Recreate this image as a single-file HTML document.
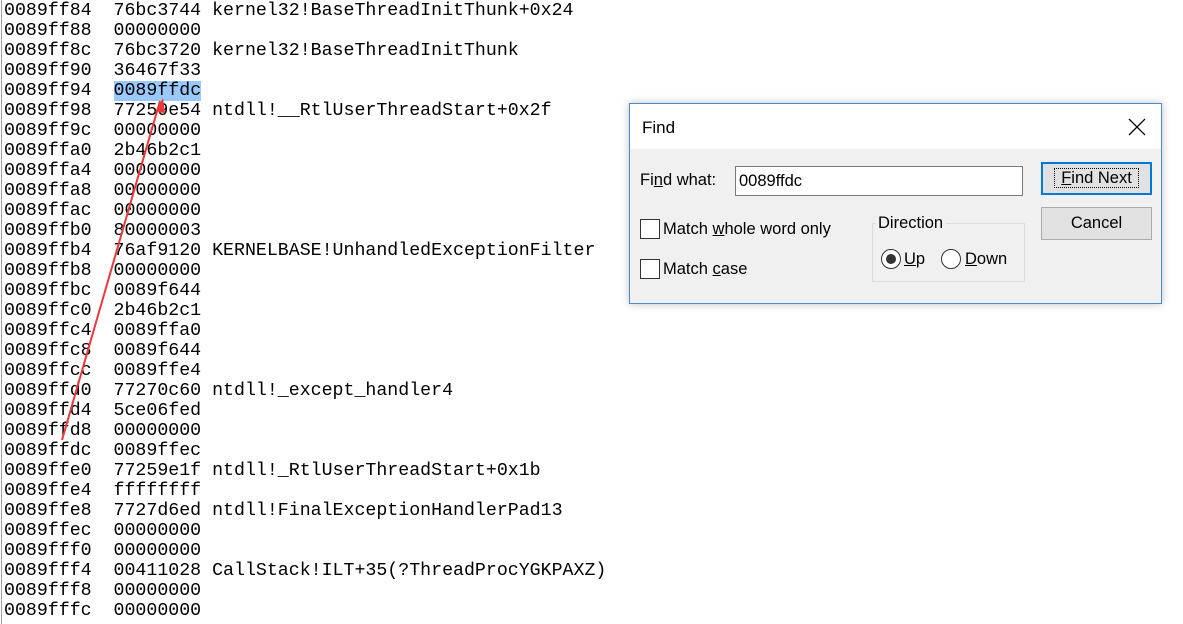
<!DOCTYPE html>
<html><head><style>
body{margin:0;width:1183px;height:624px;background:#fff;position:relative;overflow:hidden}
.lb{position:absolute;left:1px;top:0;width:1px;height:624px;background:#a0a0a0}
pre{position:absolute;left:4px;top:1px;margin:0;font-family:"Courier New","Liberation Mono",monospace;font-size:18.25px;line-height:20px;color:#000;letter-spacing:0}
.hl{background:#99c9ff}
.dlg{position:absolute;left:629px;top:103px;width:531px;height:199px;background:#f0f0f0;border:1px solid #4a8ad4;box-shadow:0 0 8px rgba(0,0,0,.25);font-family:"Liberation Sans",sans-serif;font-size:16.5px;color:#000}
.tb{position:absolute;left:0;top:0;width:531px;height:45px;background:#fff}
.a{position:absolute;white-space:nowrap}
u{text-decoration:underline}
.cb{position:absolute;width:18px;height:18px;border:1px solid #333;background:#fff}
.btn{position:absolute;width:109px;height:31px;background:#e1e1e1;border:1px solid #adadad;text-align:center;line-height:31px}
</style></head><body>
<div class="lb"></div>
<pre>0089ff84  76bc3744 kernel32!BaseThreadInitThunk+0x24
0089ff88  00000000
0089ff8c  76bc3720 kernel32!BaseThreadInitThunk
0089ff90  36467f33
0089ff94  <span class="hl">0089ffdc</span>
0089ff98  77259e54 ntdll!__RtlUserThreadStart+0x2f
0089ff9c  00000000
0089ffa0  2b46b2c1
0089ffa4  00000000
0089ffa8  00000000
0089ffac  00000000
0089ffb0  80000003
0089ffb4  76af9120 KERNELBASE!UnhandledExceptionFilter
0089ffb8  00000000
0089ffbc  0089f644
0089ffc0  2b46b2c1
0089ffc4  0089ffa0
0089ffc8  0089f644
0089ffcc  0089ffe4
0089ffd0  77270c60 ntdll!_except_handler4
0089ffd4  5ce06fed
0089ffd8  00000000
0089ffdc  0089ffec
0089ffe0  77259e1f ntdll!_RtlUserThreadStart+0x1b
0089ffe4  ffffffff
0089ffe8  7727d6ed ntdll!FinalExceptionHandlerPad13
0089ffec  00000000
0089fff0  00000000
0089fff4  00411028 CallStack!ILT+35(?ThreadProcYGKPAXZ)
0089fff8  00000000
0089fffc  00000000</pre>
<svg style="position:absolute;left:0;top:0" width="1183" height="624"><line x1="160" y1="101" x2="62" y2="440" stroke="#e83a3a" stroke-width="2"/><polygon points="163,98 155,112 165,113" fill="#e83a3a"/></svg>
<div class="dlg">
<div class="tb"></div>
<div class="a" style="left:12px;top:14px;font-size:17px">Find</div>
<svg class="a" style="left:498px;top:14px" width="18" height="18"><path d="M1 1L17 17M17 1L1 17" stroke="#000" stroke-width="1.3"/></svg>
<div class="a" style="left:10px;top:67px">Fi<u>n</u>d what:</div>
<div class="a" style="left:105px;top:62px;width:286px;height:28px;background:#fff;border:1px solid #7a7a7a"><span style="position:absolute;left:3px;top:5px">0089ffdc</span></div>
<div class="cb" style="left:10px;top:115px"></div>
<div class="a" style="left:33px;top:116px">Match <u>w</u>hole word only</div>
<div class="cb" style="left:10px;top:155px"></div>
<div class="a" style="left:33px;top:156px">Match <u>c</u>ase</div>
<div class="a" style="left:242px;top:119px;width:151px;height:57px;border:1px solid #dcdcdc"></div>
<div class="a" style="left:245px;top:110px;background:#f0f0f0;padding:0 3px">Direction</div>
<div class="a" style="left:251px;top:145px;width:18px;height:18px;border:1px solid #333;border-radius:50%;background:#fff"><div style="position:absolute;left:4px;top:4px;width:10px;height:10px;border-radius:50%;background:#333"></div></div>
<div class="a" style="left:274px;top:146px"><u>U</u>p</div>
<div class="a" style="left:311px;top:145px;width:18px;height:18px;border:1px solid #333;border-radius:50%;background:#fff"></div>
<div class="a" style="left:335px;top:146px"><u>D</u>own</div>
<div class="btn" style="left:411px;top:58px;border:2px solid #0078d7;width:107px;height:29px;line-height:29px"><span style="outline:1px dotted #000;padding:0 6px"><u>F</u>ind Next</span></div>
<div class="btn" style="left:411px;top:103px">Cancel</div>
</div>
</body></html>
